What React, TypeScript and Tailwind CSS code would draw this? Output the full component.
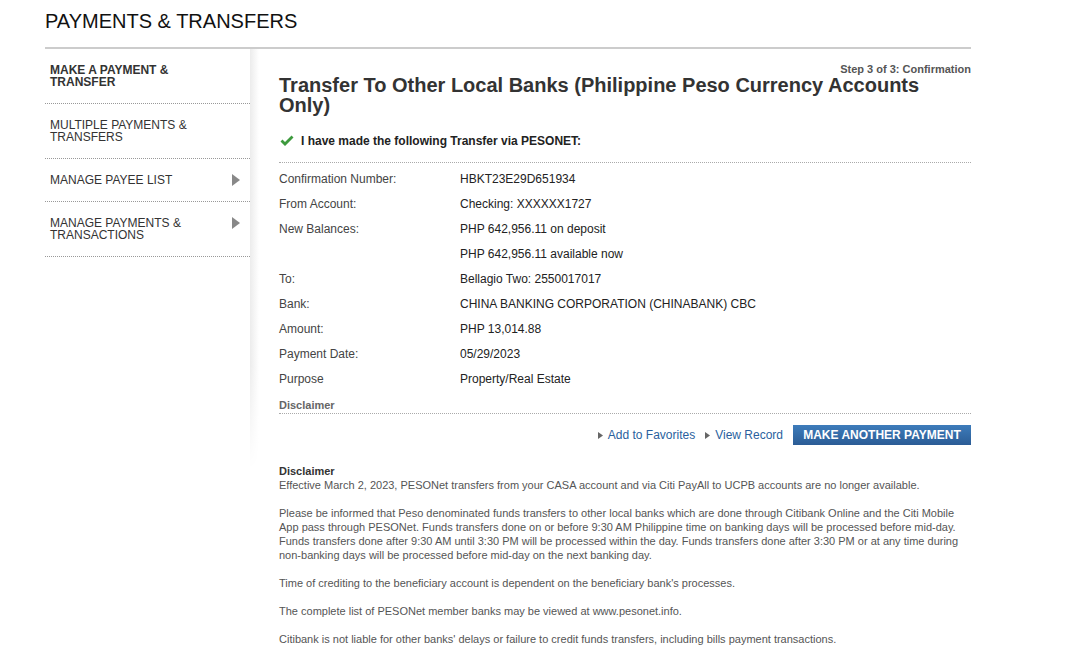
import React from "react";

const rows: [string, string][] = [
  ["Confirmation Number:", "HBKT23E29D651934"],
  ["From Account:", "Checking: XXXXXX1727"],
  ["New Balances:", "PHP 642,956.11 on deposit"],
  ["", "PHP 642,956.11 available now"],
  ["To:", "Bellagio Two: 2550017017"],
  ["Bank:", "CHINA BANKING CORPORATION (CHINABANK) CBC"],
  ["Amount:", "PHP 13,014.88"],
  ["Payment Date:", "05/29/2023"],
  ["Purpose", "Property/Real Estate"],
];

function Arrow() {
  return (
    <svg width="8" height="12" viewBox="0 0 8 12" className="flex-none">
      <polygon points="0,0 8,6 0,12" fill="#888" />
    </svg>
  );
}

function SmallArrow() {
  return (
    <svg width="5" height="7" viewBox="0 0 5 7" className="mr-[5px] flex-none">
      <polygon points="0,0 5,3.5 0,7" fill="#666" />
    </svg>
  );
}

export default function App() {
  return (
    <div className="min-h-[646px] bg-white font-['Liberation_Sans',Arial,sans-serif] text-[#333]">
      <div className="ml-[45px] w-[926px]">
        <div className="h-[49px] border-b-2 border-[#cccccc] pt-[9px]">
          <h1 className="text-[20px] leading-[24px] text-[#111]">PAYMENTS &amp; TRANSFERS</h1>
        </div>
        <div className="flex">
          <nav className="w-[205px] flex-none">
            <div className="border-b border-dotted border-[#999] px-[5px] pt-[15px] pb-[15px] text-[12px] font-bold leading-[12px] text-[#333]">
              MAKE A PAYMENT &amp;<br />TRANSFER
            </div>
            <div className="border-b border-dotted border-[#999] px-[5px] py-[15px] text-[12px] leading-[12px] text-[#333]">
              MULTIPLE PAYMENTS &amp;<br />TRANSFERS
            </div>
            <div className="flex items-start justify-between border-b border-dotted border-[#999] pl-[5px] pr-[10px] py-[15px] text-[12px] leading-[12px] text-[#333]">
              <span>MANAGE PAYEE LIST</span>
              <Arrow />
            </div>
            <div className="flex items-start justify-between border-b border-dotted border-[#999] pl-[5px] pr-[10px] py-[15px] text-[12px] leading-[12px] text-[#333]">
              <span>
                MANAGE PAYMENTS &amp;<br />TRANSACTIONS
              </span>
              <Arrow />
            </div>
          </nav>
          <div className="h-[420px] w-[9px] flex-none bg-[linear-gradient(to_right,#ececec,#ffffff)] [mask-image:linear-gradient(to_bottom,black_75%,transparent)]"></div>
          <main className="ml-[20px] w-[692px] flex-none">
            <div className="mt-[14px] h-[12px] text-right text-[11px] font-bold leading-[12px] text-[#555]">
              Step 3 of 3: Confirmation
            </div>
            <h2 className="text-[20px] font-bold leading-[20px] text-[#333]">
              Transfer To Other Local Banks (Philippine Peso Currency Accounts Only)
            </h2>
            <div className="mt-[19px] flex items-center border-b border-dotted border-[#aaa] pb-[14px]">
              <svg width="14" height="12" viewBox="0 0 14 12" className="ml-[1px] mr-[7px]">
                <path d="M0.5 6.5 L2.5 4.5 L5 7 L11.5 0.5 L13.5 2.5 L5 11 Z" fill="#3d9a3d" />
              </svg>
              <span className="text-[12px] font-bold leading-[14px] text-[#222]">
                I have made the following Transfer via PESONET:
              </span>
            </div>
            <div className="pt-[3px]">
              {rows.map(([l, v], i) => (
                <div key={i} className="flex h-[25px] items-center text-[12px]">
                  <div className="w-[181px] text-[#444]">{l}</div>
                  <div className="text-[#222]">{v}</div>
                </div>
              ))}
            </div>
            <div className="mt-[8px] border-b border-dotted border-[#aaa] pb-[1px] text-[11px] font-bold leading-[13px] text-[#666]">
              Disclaimer
            </div>
            <div className="mt-[11px] flex h-[20px] items-center justify-end text-[12px]">
              <a className="flex items-center text-[#2a5f9e]">
                <SmallArrow />
                Add to Favorites
              </a>
              <a className="ml-[10px] flex items-center text-[#2a5f9e]">
                <SmallArrow />
                View Record
              </a>
              <button className="ml-[10px] h-[20px] w-[178px] bg-[linear-gradient(to_bottom,#3d7cbb,#2b5c95)] text-[12px] font-bold text-white">
                MAKE ANOTHER PAYMENT
              </button>
            </div>
            <div className="mt-[19px] text-[11px] leading-[14px] text-[#555]">
              <div className="font-bold text-[#333]">Disclaimer</div>
              <p>
                Effective March 2, 2023, PESONet transfers from your CASA account and via Citi PayAll to UCPB accounts are no longer available.
              </p>
              <p className="mt-[14px] pr-[10px]">
                Please be informed that Peso denominated funds transfers to other local banks which are done through Citibank Online and the Citi Mobile App pass through PESONet. Funds transfers done on or before 9:30 AM Philippine time on banking days will be processed before mid-day. Funds transfers done after 9:30 AM until 3:30 PM will be processed within the day. Funds transfers done after 3:30 PM or at any time during non-banking days will be processed before mid-day on the next banking day.
              </p>
              <p className="mt-[14px]">
                Time of crediting to the beneficiary account is dependent on the beneficiary bank's processes.
              </p>
              <p className="mt-[14px]">
                The complete list of PESONet member banks may be viewed at www.pesonet.info.
              </p>
              <p className="mt-[14px]">
                Citibank is not liable for other banks' delays or failure to credit funds transfers, including bills payment transactions.
              </p>
            </div>
          </main>
        </div>
      </div>
    </div>
  );
}
